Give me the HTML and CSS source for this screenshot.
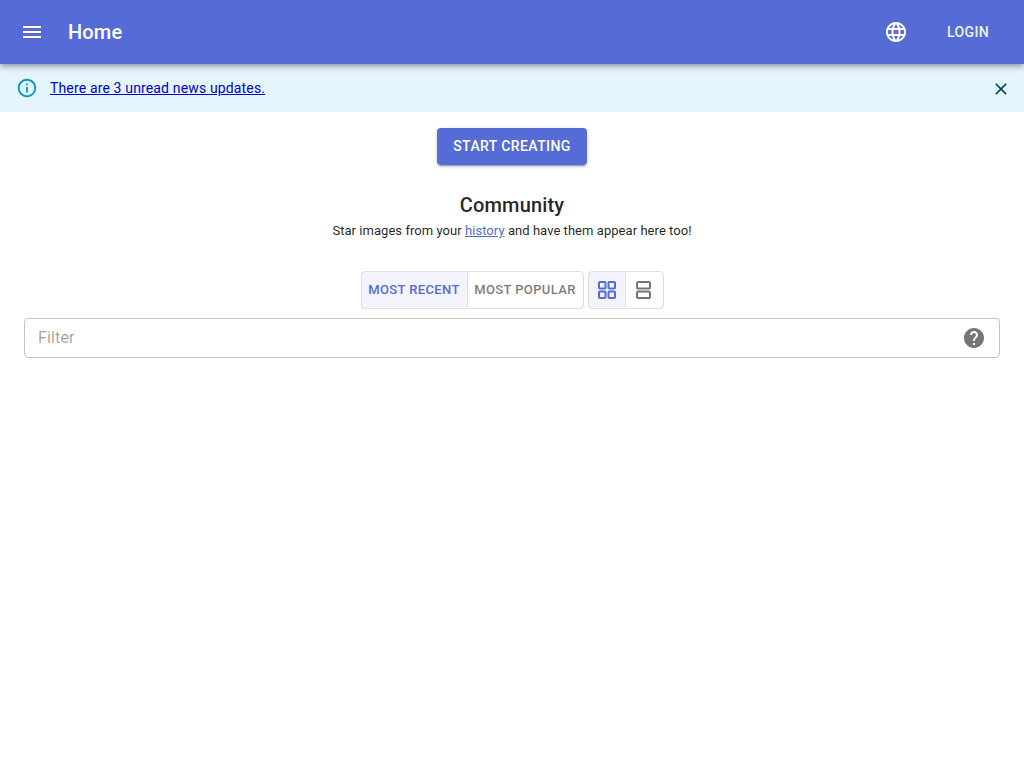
FILE: index.html
```html
<!DOCTYPE html>
<html lang="en">
<head>
<meta charset="utf-8">
<title>Home</title>
<link rel="stylesheet" href="styles.css">
</head>
<body>
<header class="appbar">
  <button class="icon-btn menu-btn" aria-label="menu">
    <svg viewBox="0 0 24 24" class="icon"><path d="M3 18h18v-2H3v2zm0-5h18v-2H3v2zm0-7v2h18V6H3z"/></svg>
  </button>
  <h1 class="title">Home</h1>
  <button class="icon-btn lang-btn" aria-label="language">
    <svg viewBox="0 0 24 24" class="icon"><path d="M11.99 2C6.47 2 2 6.48 2 12s4.47 10 9.99 10C17.52 22 22 17.52 22 12S17.52 2 11.99 2zm6.93 6h-2.95c-.32-1.25-.78-2.45-1.38-3.56 1.84.63 3.37 1.91 4.33 3.56zM12 4.04c.83 1.2 1.48 2.53 1.91 3.96h-3.82c.43-1.43 1.08-2.76 1.91-3.96zM4.26 14C4.1 13.36 4 12.69 4 12s.1-1.36.26-2h3.38c-.08.66-.14 1.32-.14 2s.06 1.34.14 2H4.26zm.82 2h2.95c.32 1.25.78 2.45 1.38 3.56-1.84-.63-3.37-1.9-4.33-3.56zm2.95-8H5.08c.96-1.66 2.49-2.93 4.33-3.56C8.81 5.55 8.35 6.75 8.03 8zM12 19.96c-.83-1.2-1.48-2.53-1.91-3.96h3.82c-.43 1.43-1.08 2.76-1.91 3.96zM14.34 14H9.66c-.09-.66-.16-1.32-.16-2s.07-1.35.16-2h4.68c.09.65.16 1.32.16 2s-.07 1.34-.16 2zm.25 5.56c.6-1.11 1.06-2.31 1.38-3.56h2.95c-.96 1.65-2.49 2.93-4.33 3.56zM16.36 14c.08-.66.14-1.32.14-2s-.06-1.34-.14-2h3.38c.16.64.26 1.31.26 2s-.1 1.36-.26 2h-3.38z"/></svg>
  </button>
  <button class="login-btn">LOGIN</button>
</header>

<div class="alert">
  <svg viewBox="0 0 24 24" class="alert-icon"><path d="M11 7h2v2h-2zm0 4h2v6h-2zm1-9C6.48 2 2 6.48 2 12s4.48 10 10 10 10-4.48 10-10S17.52 2 12 2zm0 18c-4.41 0-8-3.59-8-8s3.59-8 8-8 8 3.59 8 8-3.59 8-8 8z"/></svg>
  <a class="alert-link" href="#">There are 3 unread news updates.</a>
  <svg viewBox="0 0 24 24" class="alert-close"><path d="M19 6.41 17.59 5 12 10.59 6.41 5 5 6.41 10.59 12 5 17.59 6.41 19 12 13.41 17.59 19 19 17.59 13.41 12z"/></svg>
</div>

<main class="content">
  <button class="cta">START CREATING</button>
  <h2 class="heading">Community</h2>
  <p class="sub">Star images from your <a href="#" class="sub-link">history</a> and have them appear here too!</p>
  <div class="toggles">
    <div class="group">
      <button class="toggle text recent active">MOST RECENT</button>
      <button class="toggle text popular">MOST POPULAR</button>
    </div>
    <div class="group">
      <button class="toggle view grid active" aria-label="grid">
        <svg viewBox="0 0 24 24" class="icon"><rect x="4" y="4" width="6.5" height="6.5" rx=".8" class="outline"/><rect x="13.5" y="4" width="6.5" height="6.5" rx=".8" class="outline"/><rect x="4" y="13.5" width="6.5" height="6.5" rx=".8" class="outline"/><rect x="13.5" y="13.5" width="6.5" height="6.5" rx=".8" class="outline"/></svg>
      </button>
      <button class="toggle view list" aria-label="list">
        <svg viewBox="0 0 24 24" class="icon"><rect x="5" y="4" width="13" height="6.6" rx="1.6" class="outline"/><rect x="5" y="13.4" width="13" height="6.6" rx="1.6" class="outline"/></svg>
      </button>
    </div>
  </div>
  <div class="filter">
    <span class="placeholder">Filter</span>
    <svg viewBox="0 0 24 24" class="help"><path d="M12 2C6.48 2 2 6.48 2 12s4.48 10 10 10 10-4.48 10-10S17.52 2 12 2zm1 17h-2v-2h2v2zm2.07-7.75-.9.92C13.45 12.9 13 13.5 13 15h-2v-.5c0-1.1.45-2.1 1.17-2.83l1.24-1.26c.37-.36.59-.86.59-1.41 0-1.1-.9-2-2-2s-2 .9-2 2H8c0-2.21 1.79-4 4-4s4 1.79 4 4c0 .88-.36 1.68-.93 2.25z"/></svg>
  </div>
</main>
</body>
</html>
```
FILE: styles.css
```css
* { box-sizing: border-box; }
html, body { margin: 0; padding: 0; background: #fff; }
body { font-family: Roboto, "Liberation Sans", sans-serif; color: rgba(0,0,0,.87); height: 768px; overflow: hidden; }
button { font-family: inherit; border: 0; background: none; padding: 0; cursor: pointer; }

.appbar {
  position: relative; z-index: 2;
  height: 64px; display: flex; align-items: center;
  background: #556cd6; color: #fff; padding: 0 24px 0 20px;
  box-shadow: 0 2px 4px -1px rgba(0,0,0,.2), 0 4px 5px 0 rgba(0,0,0,.14), 0 1px 10px 0 rgba(0,0,0,.12);
}
.icon { width: 24px; height: 24px; fill: currentColor; display: block; }
.icon-btn { color: #fff; display: flex; }
.title { margin: 0 0 0 24px; font-size: 20px; font-weight: 500; line-height: 32px; letter-spacing: .0075em; flex: 1; }
.login-btn { color: #fff; width: 72px; margin-left: 24px; height: 36px; font-size: 14px; font-weight: 500; letter-spacing: .02857em; opacity: .9; margin-right: -4px; }

.alert {
  height: 48px; display: flex; align-items: center;
  background: #e5f5fc; padding: 0 12px 0 16px; font-size: 14px;
  letter-spacing: .01071em;
}
.alert-icon { width: 22px; height: 22px; fill: #0a97c0; margin-right: 12px; }
.alert-link { color: #0000d8; flex: 1; }
.alert-close { width: 20px; height: 20px; fill: #014361; margin-top: 1px; margin-right: 1px; }

.content { display: flex; flex-direction: column; align-items: center; padding: 16px 24px 0; }
.cta {
  width: 150px; height: 37px; border-radius: 4px; background: #556cd6; color: #fff; padding-bottom: 2px;
  font-size: 14px; font-weight: 500; letter-spacing: .02857em;
  box-shadow: 0 3px 1px -2px rgba(0,0,0,.2), 0 2px 2px 0 rgba(0,0,0,.14), 0 1px 5px 0 rgba(0,0,0,.12);
}
.heading { margin: 24px 0 0; font-size: 20px; font-weight: 500; line-height: 32px; letter-spacing: .0075em; }
.sub { margin: 0; font-size: 13px; line-height: 20px; letter-spacing: .05px; }
.sub-link { color: #556cd6; }

.toggles { display: flex; gap: 4px; margin-top: 30px; }
.group { display: flex; height: 38px; border-radius: 4px; border: 1px solid rgba(0,0,0,.12); }
.toggle { height: 100%; color: rgba(0,0,0,.54); display: flex; align-items: center; justify-content: center; }
.toggle + .toggle { border-left: 1px solid rgba(0,0,0,.12); }
.toggle.text { font-size: 13px; font-weight: 500; letter-spacing: .02857em; padding-bottom: 2px; }
.toggle.recent { width: 105px; }
.toggle.popular { width: 116px; }
.toggle.grid { width: 36px; }
.toggle.list { width: 38px; }
.outline { fill: none; stroke: currentColor; stroke-width: 2; }
.toggle.active { background: rgba(85,108,214,.08); color: #556cd6; }

.filter {
  align-self: stretch; height: 40px; margin-top: 9px; display: flex; align-items: center; justify-content: space-between;
  border: 1px solid rgba(0,0,0,.23); border-radius: 4px; padding: 0 13px;
}
.placeholder { font-size: 16px; color: rgba(0,0,0,.38); letter-spacing: .00938em; padding-bottom: 2px; }
.help { width: 24px; height: 24px; fill: rgba(0,0,0,.54); }
```
